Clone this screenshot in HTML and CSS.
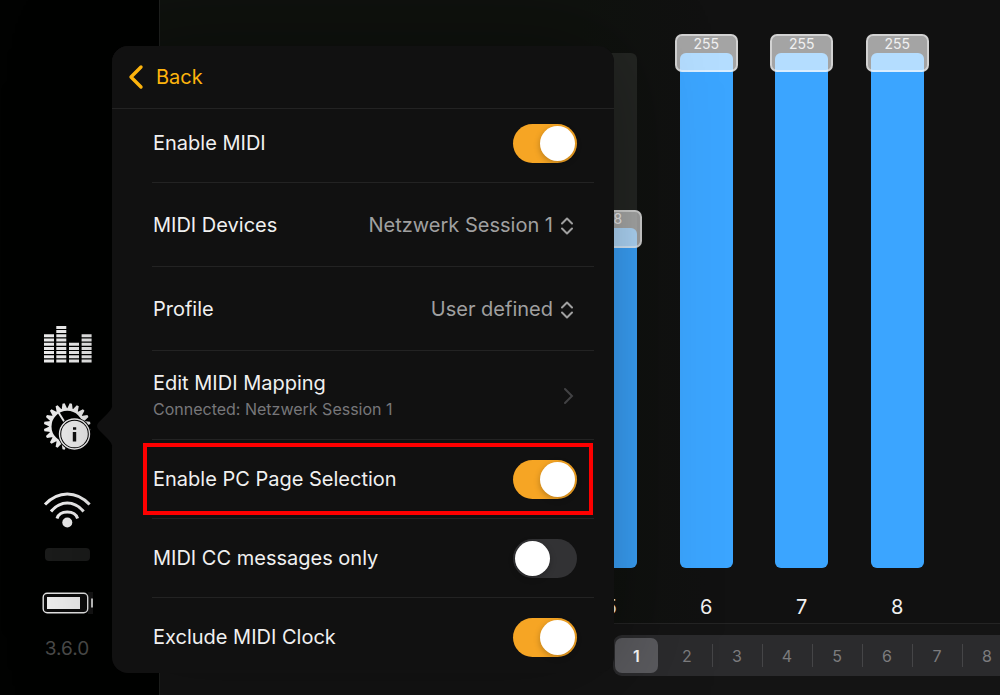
FILE: index.html
```html
<!DOCTYPE html>
<html lang="en">
<head>
    <meta charset="UTF-8">
    <meta name="viewport" content="width=device-width, initial-scale=1.0">
    <title>MIDI Settings</title>
    <link rel="stylesheet" href="styles.css">
</head>
<body>

<aside class="sidebar">
    <button class="icon-button" aria-label="Faders">
        <svg width="49" height="38" viewBox="0 0 49 38" stroke="#f2f2f2" stroke-width="10" stroke-dasharray="3 1.2">
            <path d="M6 37.5V9M18.3 37.5V0.5M31 37.5V17M43.6 37.5V9"/>
        </svg>
    </button>
    <button class="icon-button" aria-label="Settings and info">
        <svg width="49" height="49" viewBox="0 0 49 49">
            <defs>
                <path id="tooth" d="M21.2 7.5L23.1 1.2h2.2l1.9 6.3z"/>
                <g id="teeth">
                    <use href="#tooth" transform="rotate(9 24.2 24.5)"/>
                    <use href="#tooth" transform="rotate(27 24.2 24.5)"/>
                    <use href="#tooth" transform="rotate(45 24.2 24.5)"/>
                    <use href="#tooth" transform="rotate(63 24.2 24.5)"/>
                    <use href="#tooth" transform="rotate(81 24.2 24.5)"/>
                </g>
            </defs>
            <g fill="#f2f2f2">
                <use href="#teeth"/>
                <use href="#teeth" transform="rotate(90 24.2 24.5)"/>
                <use href="#teeth" transform="rotate(180 24.2 24.5)"/>
                <use href="#teeth" transform="rotate(270 24.2 24.5)"/>
            </g>
            <circle cx="24.2" cy="24.5" r="17" fill="none" stroke="#f2f2f2" stroke-width="2.6"/>
            <path d="M15.5 10.5L24 24" stroke="#f2f2f2" stroke-width="2"/>
            <circle cx="31.5" cy="32" r="16.6" fill="#000"/>
            <circle cx="31.5" cy="32" r="15" fill="none" stroke="#f2f2f2" stroke-width="1.4"/>
            <circle cx="31.5" cy="32" r="13.3" fill="#f2f2f2"/>
            <path d="M30 25.2h3.2v2.6H30zM29.8 30h3.4v9.6h-3.4z" fill="#111"/>
        </svg>
    </button>
    <button class="icon-button" aria-label="Wi-Fi">
        <svg width="49" height="37" viewBox="0 0 49 37" fill="none" stroke="#f2f2f2" stroke-width="3">
            <path d="M2 13.5Q12 3 24.3 3T46.6 13.5"/>
            <path d="M8 20.5Q15 12 24.3 12T40.6 20.5"/>
            <path d="M14 27.5Q16 21 24.3 21T34.6 27.5"/>
            <circle cx="24.3" cy="31.5" r="5" fill="#f2f2f2" stroke="none"/>
        </svg>
    </button>
    <div class="status-pill"></div>
    <svg class="battery" width="51" height="22" viewBox="0 0 51 22">
        <rect x="46" width="5" height="22" fill="#151515"/>
        <rect x="1.2" y="1.2" width="44.5" height="19.6" rx="4" fill="#0b0b0b" stroke="#e8e8e8" stroke-width="1.4"/>
        <rect x="5" y="5" width="33" height="12" fill="#f2f2f2"/>
        <rect x="49" y="6.5" width="2" height="9" fill="#c8c8c8"/>
    </svg>
    <div class="version">3.6.0</div>
</aside>

<main class="mixer">
    <div class="channels">
        <div class="channel first-visible">
            <div class="track" style="--level: 66%">
                <div class="fill"></div>
                <input class="fader" type="range" id="ch5" min="0" max="255" value="168">
                <output class="value" for="ch5">168</output>
            </div>
            <label for="ch5">5</label>
        </div>
        <div class="channel">
            <div class="track" style="--level: 100%">
                <div class="fill"></div>
                <input class="fader" type="range" id="ch6" min="0" max="255" value="255">
                <output class="value" for="ch6">255</output>
            </div>
            <label for="ch6">6</label>
        </div>
        <div class="channel">
            <div class="track" style="--level: 100%">
                <div class="fill"></div>
                <input class="fader" type="range" id="ch7" min="0" max="255" value="255">
                <output class="value" for="ch7">255</output>
            </div>
            <label for="ch7">7</label>
        </div>
        <div class="channel">
            <div class="track" style="--level: 100%">
                <div class="fill"></div>
                <input class="fader" type="range" id="ch8" min="0" max="255" value="255">
                <output class="value" for="ch8">255</output>
            </div>
            <label for="ch8">8</label>
        </div>
    </div>
    <footer class="page-bar">
        <nav class="pages" aria-label="Pages">
            <button class="page active">1</button>
            <button class="page">2</button>
            <button class="page">3</button>
            <button class="page">4</button>
            <button class="page">5</button>
            <button class="page">6</button>
            <button class="page">7</button>
            <button class="page">8</button>
        </nav>
    </footer>
</main>

<section class="popover" aria-label="MIDI settings">
    <svg class="arrow" width="17" height="44" viewBox="0 0 17 44">
        <path d="M17 0Q16 5 12 9L3 18Q-1 22 3 26L12 35Q16 39 17 44z" fill="#111"/>
    </svg>
    <div class="panel">
        <header class="panel-header">
            <button class="back">
                <svg width="16" height="26" viewBox="0 0 16 26" fill="none" stroke="#fdb40d" stroke-width="3.4" stroke-linecap="round" stroke-linejoin="round">
                    <path d="M13 3L3 13L13 23"/>
                </svg>
                Back
            </button>
        </header>
        <div class="rows">
            <div class="row">
                <label for="enable-midi">Enable MIDI</label>
                <input class="toggle" type="checkbox" id="enable-midi" checked>
            </div>
            <div class="row choice">
                <label for="devices">MIDI Devices</label>
                <div class="select-box">
                    <select id="devices">
                        <option>Netzwerk Session 1</option>
                    </select>
                    <svg class="updown" width="14" height="18" viewBox="0 0 14 18">
                        <path d="M2 6.5L7 1.5L12 6.5M2 11.5L7 16.5L12 11.5"/>
                    </svg>
                </div>
            </div>
            <div class="row choice">
                <label for="profile">Profile</label>
                <div class="select-box">
                    <select id="profile">
                        <option>User defined</option>
                    </select>
                    <svg class="updown" width="14" height="18" viewBox="0 0 14 18">
                        <path d="M2 6.5L7 1.5L12 6.5M2 11.5L7 16.5L12 11.5"/>
                    </svg>
                </div>
            </div>
            <a class="row mapping" href="#mapping">
                <span>
                    Edit MIDI Mapping
                    <small>Connected: Netzwerk Session 1</small>
                </span>
                <svg class="chevron" width="12" height="18" viewBox="0 0 12 18" fill="none" stroke="#424244" stroke-width="2" stroke-linecap="round">
                    <path d="M2 2L9 9L2 16"/>
                </svg>
            </a>
            <div class="row highlighted">
                <label for="pc-page">Enable PC Page Selection</label>
                <input class="toggle" type="checkbox" id="pc-page" checked>
            </div>
            <div class="row">
                <label for="cc-only">MIDI CC messages only</label>
                <input class="toggle" type="checkbox" id="cc-only">
            </div>
            <div class="row">
                <label for="exclude-clock">Exclude MIDI Clock</label>
                <input class="toggle" type="checkbox" id="exclude-clock" checked>
            </div>
        </div>
    </div>
</section>

</body>
</html>
```
FILE: styles.css
```css
* {
    box-sizing: border-box;
}
body {
    margin: 0;
    height: 100vh;
    display: flex;
    position: relative;
    overflow: hidden;
    background-color: #111;
    color: #f0f0f0;
    font-family: Inter, "Liberation Sans", sans-serif;
    font-size: 20px;
}
button {
    padding: 0;
    border: none;
    background: none;
    font: inherit;
    cursor: pointer;
}
svg {
    display: block;
}

/* sidebar */
.sidebar {
    width: 160px;
    flex-shrink: 0;
    display: flex;
    flex-direction: column;
    align-items: center;
    justify-content: flex-end;
    padding: 0 25px 33px 0;
    background-color: #010201;
    border-right: 1px solid #1f211f;
}
.icon-button {
    margin-bottom: 39px;
}
.icon-button:nth-of-type(2) {
    margin-bottom: 40px;
}
.icon-button:nth-of-type(3) {
    margin-bottom: 20px;
}
.status-pill {
    width: 45px;
    height: 13px;
    margin-bottom: 31px;
    border-radius: 4px;
    background-color: #1b1c1b;
}
.battery {
    margin-bottom: 22px;
}
.version {
    font-size: 19px;
    line-height: 26px;
    color: #4b4b4a;
}

/* mixer */
.mixer {
    flex: 1;
    min-width: 0;
    display: flex;
    flex-direction: column;
    background: linear-gradient(to right, #0f120e 50%, #111 65%);
}
.channels {
    flex: 1;
    display: grid;
    grid-template-columns: repeat(8, 1fr);
    padding: 53px 55px 3px 21px;
}
.channel {
    display: flex;
    flex-direction: column;
    align-items: center;
}
.channel.first-visible {
    grid-column-start: 5;
}
.channel label {
    margin-top: 26px;
    line-height: 26px;
}
.track {
    position: relative;
    flex: 1;
    width: 53px;
    border-radius: 6px;
    background-color: #242623;
}
.fill {
    position: absolute;
    inset: auto 0 0;
    height: var(--level);
    border-radius: 6px;
    background-color: #3ba5ff;
}
.fader {
    position: absolute;
    inset: -19px -5px;
    width: 63px;
    height: calc(100% + 38px);
    margin: 0;
    appearance: none;
    background: none;
    writing-mode: vertical-lr;
    direction: rtl;
}
.fader::-webkit-slider-thumb {
    appearance: none;
    width: 63px;
    height: 38px;
    border: 2px solid rgba(255, 255, 255, 0.5);
    border-radius: 7px;
    background-color: rgba(255, 255, 255, 0.62);
}
.value {
    position: absolute;
    left: 0;
    right: 0;
    bottom: var(--level);
    line-height: 18px;
    font-size: 14px;
    text-align: center;
    pointer-events: none;
}
.page-bar {
    padding: 11px 0 19px 453px;
    border-top: 1px solid #242424;
    background-color: #141414;
    overflow: hidden;
}
.pages {
    display: flex;
    width: max-content;
    padding: 3px 2px;
    border-radius: 9px;
    background-color: #2b2b2d;
}
.page {
    width: 50px;
    height: 35px;
    position: relative;
    font-size: 16px;
    color: #7c7c7e;
}
.page.active {
    width: 43px;
    margin-right: 4px;
    border-radius: 7px;
    background-color: #5b5b5f;
    color: #fff;
    font-weight: 600;
}
.page + .page + .page::before {
    content: "";
    position: absolute;
    left: 0;
    top: 6px;
    bottom: 6px;
    width: 1px;
    background-color: #454547;
}

/* popover */
.popover {
    position: absolute;
    top: 46px;
    bottom: 22px;
    left: 112px;
    width: 502px;
    border-radius: 16px;
    box-shadow: 0 0 100px rgba(0, 0, 0, 0.35);
}
.arrow {
    position: absolute;
    right: 100%;
    top: 358px;
    margin-right: -1px;
}
.panel {
    height: 100%;
    overflow: hidden;
    border-radius: 16px;
    background-color: #111;
}
.panel-header {
    position: relative;
    height: 63px;
    padding: 0 16px;
    display: flex;
    align-items: center;
    border-bottom: 1px solid #232323;
    background-color: #111;
}
.back {
    display: flex;
    align-items: center;
    gap: 12px;
    color: #fdb40d;
}
.rows {
    margin: -5px 20px 0 40px;
}
.row {
    position: relative;
    display: flex;
    align-items: center;
    justify-content: space-between;
    height: 79px;
    padding-right: 17px;
    padding-left: 1px;
    border-bottom: 1px solid #232323;
    color: inherit;
    text-decoration: none;
}
.row.choice {
    height: 84px;
}
.row.mapping {
    height: 89px;
    padding-top: 2px;
    line-height: 26px;
}
.row small {
    display: block;
    font-size: 16px;
    color: #77777a;
}
.row.highlighted::after {
    content: "";
    position: absolute;
    inset: 3px 1px 3px -9px;
    border: 4px solid #fe0000;
    pointer-events: none;
}
.select-box {
    position: relative;
}
.select-box select {
    width: 260px;
    padding: 0 24px 0 0;
    appearance: none;
    border: none;
    background: none;
    font: inherit;
    color: #a0a0a0;
    text-align-last: right;
}
.updown {
    position: absolute;
    right: 3px;
    top: 4px;
    fill: none;
    stroke: #a0a0a0;
    stroke-width: 2;
    stroke-linecap: round;
    stroke-linejoin: round;
    pointer-events: none;
}
.chevron {
    margin-right: 2px;
}
.toggle {
    appearance: none;
    width: 64px;
    height: 39px;
    margin: 0;
    padding: 2px;
    border-radius: 20px;
    background-color: #323234;
    cursor: pointer;
}
.toggle::before {
    content: "";
    display: block;
    width: 35px;
    height: 35px;
    border-radius: 50%;
    background-color: #fff;
    box-shadow: 0 2px 6px rgba(0, 0, 0, 0.25);
}
.toggle:checked {
    background-color: #f6a524;
}
.toggle:checked::before {
    margin-left: auto;
}
```
